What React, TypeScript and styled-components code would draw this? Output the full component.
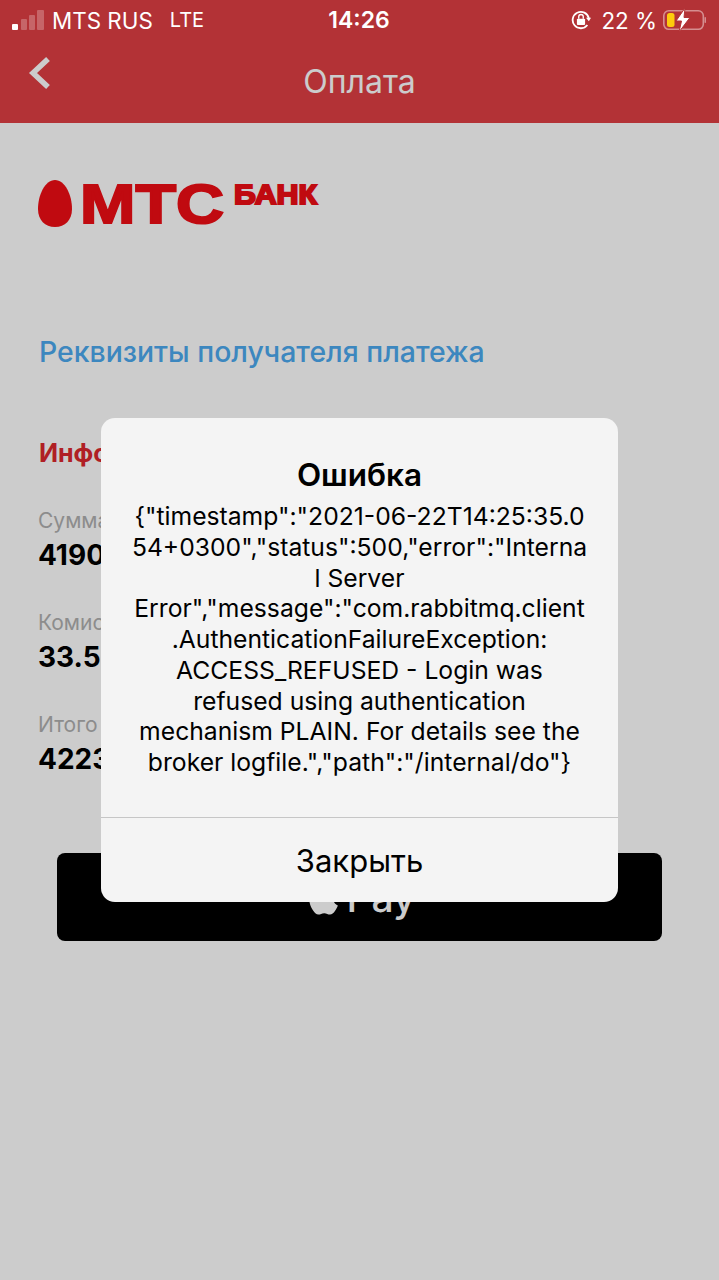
import React from 'react'
import styled, { createGlobalStyle } from 'styled-components'
import { FaApple } from 'react-icons/fa'

const ERROR_LINES = [
  '{"timestamp":"2021-06-22T14:25:35.0',
  '54+0300","status":500,"error":"Interna',
  'l Server',
  'Error","message":"com.rabbitmq.client',
  '.AuthenticationFailureException:',
  'ACCESS_REFUSED - Login was',
  'refused using authentication',
  'mechanism PLAIN. For details see the',
  'broker logfile.","path":"/internal/do"}',
]

const SUMMARY = [
  { label: 'Сумма', value: '4190.00' },
  { label: 'Комиссия', value: '33.52' },
  { label: 'Итого', value: '4223.52' },
]

export default function App() {
  return (
    <Page>
      <GlobalStyle />
      <StatusBar>
        <StatusLeft>
          <SignalIcon />
          <Carrier>MTS RUS</Carrier>
          <NetworkType>LTE</NetworkType>
        </StatusLeft>
        <Clock>14:26</Clock>
        <StatusRight>
          <RotationIcon />
          <Percent>22 %</Percent>
          <BatteryIcon />
        </StatusRight>
      </StatusBar>
      <NavBar>
        <BackButton>
          <svg width="24" height="36" viewBox="0 0 24 36" fill="none">
            <path d="M20 3 L5 17 L20 31" stroke="#fff" strokeWidth="5.5" />
          </svg>
        </BackButton>
        <NavTitle>Оплата</NavTitle>
      </NavBar>
      <Content>
        <BankLogo />
        <DetailsLink>Реквизиты получателя платежа</DetailsLink>
        <SectionTitle>Информация о платеже</SectionTitle>
        <SummaryList>
          {SUMMARY.map((item) => (
            <SummaryItem key={item.label}>
              <SummaryLabel>{item.label}</SummaryLabel>
              <SummaryValue>{item.value}</SummaryValue>
            </SummaryItem>
          ))}
        </SummaryList>
        <PayButton>
          <FaApple size={39} />
          <PayText>Pay</PayText>
        </PayButton>
      </Content>
      <Overlay>
        <Alert>
          <AlertBody>
            <AlertTitle>Ошибка</AlertTitle>
            {ERROR_LINES.map((line) => (
              <AlertLine key={line}>{line}</AlertLine>
            ))}
          </AlertBody>
          <AlertButton>Закрыть</AlertButton>
        </Alert>
      </Overlay>
    </Page>
  )
}

function SignalIcon() {
  return (
    <svg width="32" height="21" viewBox="0 0 32 21">
      <rect x="0" y="14" width="6" height="6" rx="1" fill="#fff" />
      <rect x="9" y="9" width="6" height="11" rx="1" fill="#fff" fillOpacity="0.25" />
      <rect x="17" y="5" width="6" height="15" rx="1" fill="#fff" fillOpacity="0.25" />
      <rect x="25" y="0" width="7" height="20" rx="1" fill="#fff" fillOpacity="0.25" />
    </svg>
  )
}

function RotationIcon() {
  return (
    <svg width="20" height="20" viewBox="0 0 22 22" fill="none">
      <path d="M18 16.5 A9 9 0 1 1 19.6 9" stroke="#fff" strokeWidth="2" />
      <path d="M16.5 8.5 L22 8.5 L19.6 12.5 Z" fill="#fff" />
      <rect x="6.5" y="9.5" width="9" height="7" rx="1" fill="#fff" />
      <path d="M8.5 9.5 V7.5 A2.5 2.5 0 0 1 13.5 7.5 V9.5" stroke="#fff" strokeWidth="1.5" />
    </svg>
  )
}

function BatteryIcon() {
  return (
    <svg width="43" height="24" viewBox="0 0 43 24" fill="none">
      <rect x="0.8" y="2.8" width="39.5" height="18.5" rx="5" stroke="#fff" strokeOpacity="0.45" strokeWidth="1.6" />
      <rect x="41.5" y="9" width="1.5" height="6" rx="0.7" fill="#fff" fillOpacity="0.45" />
      <rect x="4" y="5" width="7.5" height="14" rx="2.5" fill="#fecb0c" />
      <path d="M22 0 L13 13 H18.5 L16 24 L27 9.5 H21 Z" fill="#fff" stroke="#b33236" strokeWidth="1" />
    </svg>
  )
}

function BankLogo() {
  return (
    <LogoFrame>
      <svg width="282" height="80" viewBox="0 -16 282 80">
        <path d="M17 0 C7 0 0 15 0 29 C0 40 7 47 17 47 C27 47 34 40 34 29 C34 15 27 0 17 0 Z" fill="#f00d14" />
        <LogoWord x="42" y="43" fontSize="55" textLength="144" lengthAdjust="spacingAndGlyphs">
          МТС
        </LogoWord>
        <LogoWord x="196" y="23.5" fontSize="27" textLength="83" lengthAdjust="spacingAndGlyphs">
          БАНК
        </LogoWord>
      </svg>
    </LogoFrame>
  )
}

const GlobalStyle = createGlobalStyle`
  html, body {
    margin: 0;
    padding: 0;
    background: #fff;
  }
`

const Page = styled.div`
  position: relative;
  width: 719px;
  height: 1280px;
  overflow: hidden;
  background: #fff;
  font-family: Inter, 'Liberation Sans', sans-serif;
`

const StatusBar = styled.div`
  position: relative;
  z-index: 2;
  display: grid;
  grid-template-columns: 1fr auto 1fr;
  align-items: center;
  height: 40px;
  padding: 0 13px 0 12px;
  background: #b33236;
  color: #fff;
  font-size: 22px;
`

const StatusLeft = styled.div`
  display: flex;
  align-items: center;
  gap: 8px;
`

const Carrier = styled.span`
  font-size: 22.4px;
  margin-right: 9px;
`

const NetworkType = styled.span`
  font-size: 20px;
`

const Clock = styled.span`
  font-size: 23px;
  font-weight: 600;
`

const StatusRight = styled.div`
  display: flex;
  align-items: center;
  justify-content: flex-end;
`

const Percent = styled.span`
  margin: 0 6px 0 10px;
  font-size: 22.4px;
`

const NavBar = styled.div`
  position: relative;
  display: flex;
  align-items: center;
  justify-content: center;
  height: 83px;
  background: #e03f44;
`

const BackButton = styled.span`
  position: absolute;
  left: 28px;
  top: 16px;
  line-height: 0;
`

const NavTitle = styled.span`
  color: #fff;
  font-size: 32px;
  font-weight: 400;
`

const Content = styled.div`
  display: flex;
  flex-direction: column;
  align-items: flex-start;
  padding: 41px 57px 0 39px;
`

const LogoFrame = styled.div`
  line-height: 0;
  margin: 0 0 -16px -1px;
`

const LogoWord = styled.text`
  font-family: 'Liberation Sans', sans-serif;
  font-weight: 700;
  fill: #f00d14;
  stroke: #f00d14;
  stroke-width: 2px;
`

const DetailsLink = styled.a`
  margin-top: 107px;
  color: #4ca9ef;
  font-size: 28.4px;
  font-weight: 500;
  line-height: 34px;
`

const SectionTitle = styled.h2`
  margin: 67px 0 0;
  color: #dc272d;
  font-size: 25px;
  font-weight: 700;
  line-height: 34px;
`

const SummaryList = styled.div`
  display: flex;
  flex-direction: column;
  gap: 36px;
  margin: 36px 0 0 -1px;
`

const SummaryItem = styled.div`
  display: flex;
  flex-direction: column;
  gap: 2px;
`

const SummaryLabel = styled.span`
  color: #b0b0b0;
  font-size: 21px;
  line-height: 30px;
`

const SummaryValue = styled.span`
  color: #000;
  font-size: 28px;
  font-weight: 700;
  line-height: 34px;
`

const PayButton = styled.div`
  display: flex;
  align-items: center;
  justify-content: center;
  gap: 4px;
  box-sizing: border-box;
  width: 605px;
  height: 88px;
  margin: 77px 0 0 18px;
  border-radius: 8px;
  background: #000;
  color: #fff;
`

const PayText = styled.span`
  font-size: 39px;
  font-weight: 500;
`

const Overlay = styled.div`
  position: absolute;
  inset: 0;
  z-index: 1;
  display: flex;
  justify-content: center;
  align-items: flex-start;
  box-sizing: border-box;
  padding-top: 418px;
  background: rgba(0, 0, 0, 0.2);
`

const Alert = styled.div`
  display: flex;
  flex-direction: column;
  width: 517px;
  height: 484px;
  border-radius: 14px;
  background: #f4f4f4;
  color: #000;
`

const AlertBody = styled.div`
  flex: 1;
  padding-top: 38px;
  text-align: center;
  border-bottom: 1px solid #c6c6c6;
`

const AlertTitle = styled.h1`
  margin: 0 0 7px;
  font-size: 31.5px;
  font-weight: 600;
  line-height: 38px;
`

const AlertLine = styled.div`
  font-size: 24.7px;
  line-height: 30.75px;
  white-space: nowrap;
`

const AlertButton = styled.div`
  display: flex;
  align-items: center;
  justify-content: center;
  height: 84px;
  font-size: 31px;
  font-weight: 400;
`
